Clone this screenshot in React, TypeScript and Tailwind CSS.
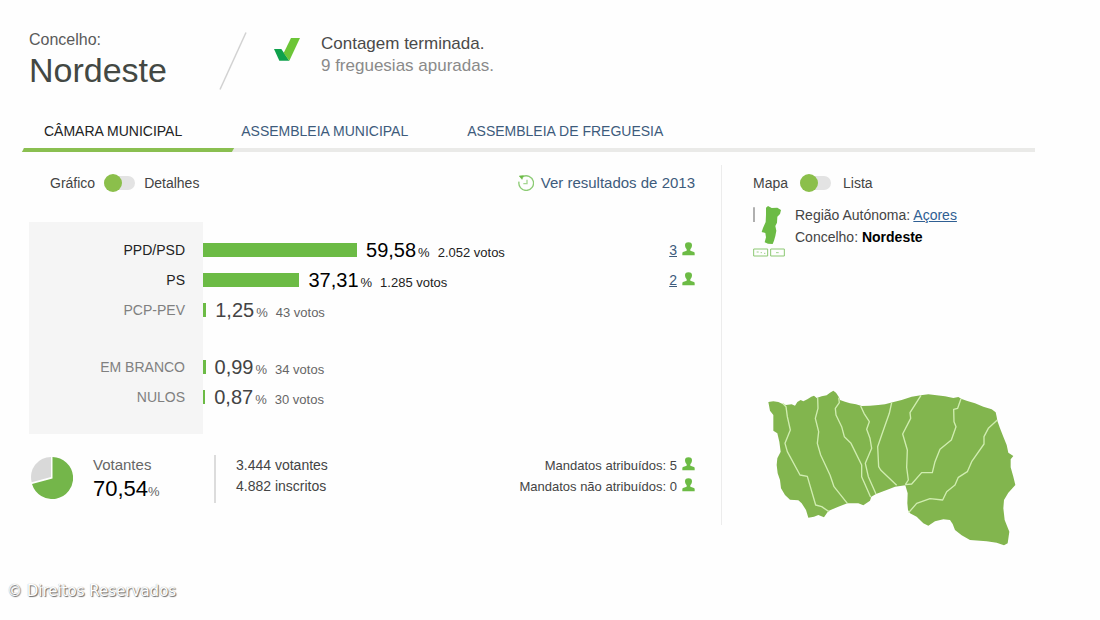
import { useState } from "react";

const results = [
  { party: "PPD/PSD", pct: 59.58, label: "59,58", votes: "2.052 votos", seats: 3 },
  { party: "PS", pct: 37.31, label: "37,31", votes: "1.285 votos", seats: 2 },
  { party: "PCP-PEV", pct: 1.25, label: "1,25", votes: "43 votos", seats: 0 },
];

const invalid = [
  { party: "EM BRANCO", pct: 0.99, label: "0,99", votes: "34 votos", seats: 0 },
  { party: "NULOS", pct: 0.87, label: "0,87", votes: "30 votos", seats: 0 },
];

// leaves room for the numbers to the right of the longest bar
const BAR_SCALE = 0.572;

const tabs = ["CÂMARA MUNICIPAL", "ASSEMBLEIA MUNICIPAL", "ASSEMBLEIA DE FREGUESIA"];

export default function App() {
  return (
    <div className="min-h-screen bg-[#fefefe] font-['Liberation_Sans',Arial,sans-serif] text-[13px] text-[#444]">
      <div className="pt-[30px] pl-[23px] pr-[65px]">
        <header className="flex items-start pl-[6px]">
          <div>
            <p className="text-base leading-5 text-[#5a5a5a]">Concelho:</p>
            <h1 className="text-[34px] leading-10 text-[#434843]">Nordeste</h1>
          </div>
          <svg className="ml-[52px] mt-[2px]" width="28" height="58" viewBox="0 0 28 58">
            <path d="M27 0.5 L1 57.5" stroke="#d2d2d2" strokeWidth="1.5" />
          </svg>
          <svg className="ml-[27px] mt-2" width="26" height="23" viewBox="0 0 78 69">
            <path d="M0 33 H22 L46 68 H16 Z" fill="#0fa14c" />
            <path d="M51 0 H78 L46 68 L29 45 Z" fill="#6cc537" />
          </svg>
          <div className="ml-[21px] pt-[3px] text-[17px] leading-[22px]">
            <p className="text-[#4a4a4a]">Contagem terminada.</p>
            <p className="text-[#8a8a8a]">9 freguesias apuradas.</p>
          </div>
        </header>

        <nav className="mt-[31px]">
          <div className="flex gap-[59px] pl-[21px] pb-[7px] text-sm leading-5">
            {tabs.map((tab, i) => (
              <a key={tab} href="#" className={i === 0 ? "text-[#222]" : "text-[#3d5b7c]"}>
                {tab}
              </a>
            ))}
          </div>
          <div className="h-1 bg-[#eaeae8]">
            <div className="h-full w-[210px] -skew-x-[30deg] bg-[#8abf50]" />
          </div>
        </nav>

        <div className="flex items-start">
          <main className="mt-[13px] flex-1 border-r border-[#ececec] pt-2 pb-[19px] pl-[6px] pr-[26px]">
            <div className="flex items-center justify-between pl-[21px]">
              <Toggle id="view" left="Gráfico" right="Detalhes" className="gap-[9px]" />
              <a href="#" className="flex items-center gap-[7px] text-[15px] leading-5 text-[#3d5b7c]">
                <HistoryIcon />
                Ver resultados de 2013
              </a>
            </div>

            <table className="mt-[29px] w-full">
              <tbody>
                <Spacer className="h-[13px]" />
                {results.map((r) => (
                  <ResultRow key={r.party} {...r} />
                ))}
                <Spacer className="h-[27px]" />
                {invalid.map((r) => (
                  <ResultRow key={r.party} {...r} />
                ))}
                <Spacer className="h-[22px]" />
              </tbody>
            </table>

            <div className="mt-[21px] flex items-start">
              <Pie />
              <div className="ml-[20px] w-[121px]">
                <p className="text-[15px] leading-5 text-[#666]">Votantes</p>
                <p className="leading-7 text-[#666]">
                  <span className="text-[22px] text-black">70,54</span>%
                </p>
              </div>
              <div className="h-12 border-l-2 border-[#dcdcdc] pl-5 text-sm leading-[21px]">
                <p>3.444 votantes</p>
                <p>4.882 inscritos</p>
              </div>
              <div className="ml-auto leading-[21px]">
                <p className="flex items-start justify-end gap-[5px]">
                  Mandatos atribuídos: 5 <PersonIcon />
                </p>
                <p className="flex items-start justify-end gap-[5px]">
                  Mandatos não atribuídos: 0 <PersonIcon />
                </p>
              </div>
            </div>
          </main>

          <aside className="w-[313px] pt-[21px] pl-[31px]">
            <Toggle id="map" left="Mapa" right="Lista" className="gap-3" />
            <div className="mt-[11px] flex items-start gap-[9px]">
              <PortugalIcon />
              <div className="text-sm leading-[22px]">
                <p>
                  Região Autónoma:{" "}
                  <a href="#" className="text-[#2f5f93] underline">
                    Açores
                  </a>
                </p>
                <p>
                  Concelho: <strong className="text-black">Nordeste</strong>
                </p>
              </div>
            </div>
            <NordesteMap />
          </aside>
        </div>
      </div>

      <footer className="mt-[35px] pl-[7px] font-['DejaVu_Sans',sans-serif] text-[15px] leading-5 text-white [text-shadow:1px_1px_1px_#666,0px_0px_1px_#999]">
        © Direitos Reservados
      </footer>
    </div>
  );
}

function Toggle({
  id,
  left,
  right,
  className,
}: {
  id: string;
  left: string;
  right: string;
  className: string;
}) {
  const [on, setOn] = useState(false);
  return (
    <div className={`flex items-center text-sm leading-5 ${className}`}>
      <label htmlFor={id}>{left}</label>
      <input
        id={id}
        type="checkbox"
        checked={on}
        onChange={(e) => setOn(e.target.checked)}
        className="flex h-[14px] w-[31px] appearance-none items-center rounded-full bg-[#e3e3e3] before:block before:size-[18px] before:shrink-0 before:rounded-full before:bg-[#8bbf4b] checked:justify-end"
      />
      <label htmlFor={id}>{right}</label>
    </div>
  );
}

function Spacer({ className }: { className: string }) {
  return (
    <tr className={className} aria-hidden="true">
      <td className="bg-[#f5f5f5]" />
      <td colSpan={2} />
    </tr>
  );
}

function ResultRow({
  party,
  pct,
  label,
  votes,
  seats,
}: {
  party: string;
  pct: number;
  label: string;
  votes: string;
  seats: number;
}) {
  const elected = seats > 0;
  return (
    <tr className="h-[30px]">
      <th
        scope="row"
        className={`w-[174px] bg-[#f5f5f5] pr-[18px] text-right text-sm font-normal ${elected ? "text-[#222]" : "text-[#808080]"}`}
      >
        {party}
      </th>
      <td>
        <div className={`flex items-center whitespace-nowrap ${elected ? "text-[#222]" : "text-[#666]"}`}>
          <div className="h-[14px] shrink-0 bg-[#6cbb45]" style={{ width: `${pct * BAR_SCALE}%` }} />
          <p className="ml-[9px] leading-6">
            <span className={`text-xl ${elected ? "text-black" : "text-[#444]"}`}>{label}</span>
            <span className="ml-[2px]">%</span>
            <span className="ml-2">{votes}</span>
          </p>
        </div>
      </td>
      <td className="w-10">
        {elected && (
          <div className="flex items-start justify-end gap-[5px]">
            <a href="#" className="text-sm leading-5 text-[#3d5b7c] underline">
              {seats}
            </a>
            <PersonIcon />
          </div>
        )}
      </td>
    </tr>
  );
}

const PersonIcon = () => (
  <svg className="mt-[2px]" width="13" height="14" viewBox="0 0 39 42" fill="#6cbb45">
    <path d="M19.500 1 C27 1 30 5 30 10 C30 16 27 19 25 22 V26 L36 30 Q38 31 38 34 V40 H1 V34 Q1 31 3 30 L14 26 V22 C12 19 9 16 9 10 C9 5 12 1 19.500 1 Z" />
  </svg>
);

const HistoryIcon = () => (
  <svg width="16" height="16" viewBox="0 0 48 48" fill="none" stroke="#8ccb74" strokeWidth="4">
    <path d="M14 5 A22 22 0 1 1 3 20" />
    <path d="M27 14 V26 H16" stroke="#a5d692" />
    <path d="M4 3 L16 2 L12 13 Z" fill="#6cbb45" stroke="#6cbb45" strokeWidth="2" />
  </svg>
);

const Pie = () => (
  <svg className="ml-[2px] mt-[2px]" width="42" height="42" viewBox="0 0 42 42">
    <path d="M20 20 L20 0 A20 20 0 0 0 0.700 25.200 Z" fill="#d9d9d9" />
    <path d="M21.500 21.500 V0 A21 21 0 1 1 1 27 Z" fill="#74b64a" />
  </svg>
);

const PortugalIcon = () => (
  <svg className="mt-[2px]" width="33" height="51" viewBox="39 18 99 153" fill="none">
    <path d="M42 22 V66" stroke="#777" strokeWidth="3.500" />
    <path
      d="M78 23 L84 18 L95 24 L112 23 L123 30 L120 42 L112 50 L111 68 L106 78 L109 92 L106 108 L102 122 L98 132 L84 131 L74 127 L78 112 L76 99 L65 96 L69 84 L77 66 L78 44 Z"
      fill="#6cbb45"
    />
    <g stroke="#8cc873" strokeWidth="3">
      <path d="M41 147 H83 V168 H41 Z M92 147 H133 V168 H92 Z" />
      <path d="M50 156 H56 M62 158 H66 M72 160 H76 M108 158 H116" strokeWidth="2.500" />
    </g>
  </svg>
);

const NordesteMap = () => (
  <svg className="mt-[133px] ml-[14px]" width="250" height="156" viewBox="51 30 750 468">
    <path
      fill="#82b54e"
      strokeLinejoin="round"
      d="M55 66 L70 64 L85 66 L98 72 L108 75 L125 73 L135 77 L142 66 L152 60 L160 64 L172 58 L184 50 L192 47 L200 54 L215 49 L230 46 L240 38 L250 32 L258 38 L266 50 L270 60 L285 65 L300 70 L318 73 L335 78 L360 77 L385 75 L405 73 L428 67 L455 60 L485 50 L512 46 L535 43 L560 46 L585 49 L610 54 L625 51 L635 57 L652 63 L675 70 L700 80 L725 88 L737 97 L740 110 L742 122 L750 145 L760 170 L770 195 L775 218 L790 228 L782 238 L782 262 L790 290 L796 315 L775 338 L762 360 L760 385 L764 420 L778 455 L773 490 L762 496 L740 488 L710 484 L660 480 L635 466 L615 450 L608 432 L600 420 L580 418 L555 424 L535 437 L520 430 L500 410 L480 400 L474 390 L472 370 L473 340 L466 316 L435 320 L410 330 L378 342 L364 350 L360 362 L340 376 L325 370 L292 370 L265 380 L235 393 L222 412 L205 405 L192 410 L175 413 L168 390 L155 370 L145 361 L120 359 L105 345 L93 325 L90 300 L83 280 L80 255 L82 235 L92 215 L88 185 L82 160 L70 152 L70 105 L60 92 Z"
    />
    <g fill="none" stroke="#d0edb0" strokeWidth="4" strokeLinejoin="round">
      <path d="M98 70 L108 80 L112 110 L121 150 L105 190 L112 215 L150 285 L172 289 L197 375 L215 380 L237 395" />
      <path d="M203 54 L204 85 L196 115 L206 155 L202 190 L212 225 L240 285 L252 320 L292 370" />
      <path d="M266 53 L268 68 L256 85 L258 105 L275 140 L283 170 L303 190 L335 255 L335 290 L362 352" />
      <path d="M332 78 L342 100 L358 125 L350 148 L360 175 L365 205 L346 250 L355 290 L378 342" />
      <path d="M425 68 L418 100 L395 165 L383 200 L386 260 L392 270 L440 316" />
      <path d="M513 46 L480 98 L482 115 L458 162 L472 210 L470 262 L475 300 L466 314" />
      <path d="M633 56 L623 85 L611 88 L612 125 L618 140 L604 180 L570 208 L555 245 L547 278 L515 278 L485 312 L466 314" />
      <path d="M742 120 L715 145 L702 170 L702 192 L665 245 L652 275 L625 292 L615 315 L590 335 L578 360 L540 356 L500 370 L476 398" />
    </g>
  </svg>
);
